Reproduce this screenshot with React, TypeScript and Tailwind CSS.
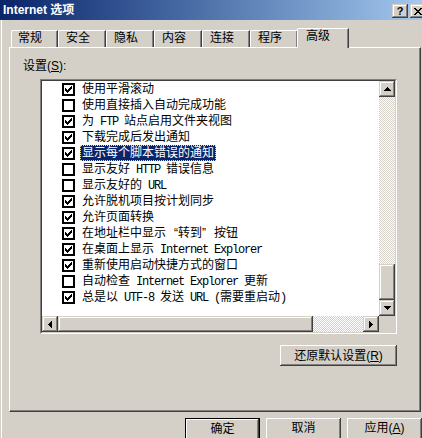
import type { ReactNode } from "react";

const RAISED =
  "bg-[#d4d0c8] shadow-[inset_-1px_-1px_#404040,inset_1px_1px_#d4d0c8,inset_-2px_-2px_#808080,inset_2px_2px_#fff]";
const BUTTON =
  "bg-[#d4d0c8] shadow-[inset_-1px_-1px_#404040,inset_1px_1px_#fff,inset_-2px_-2px_#808080]";
const TRACK =
  "bg-[image:repeating-conic-gradient(#fff_0_25%,#d4d0c8_0_50%)] bg-[length:2px_2px]";

const TABS = ["常规", "安全", "隐私", "内容", "连接", "程序"];

const ROWS: { on: boolean; text: string; selected?: boolean }[] = [
  { on: true, text: "使用平滑滚动" },
  { on: false, text: "使用直接插入自动完成功能" },
  { on: true, text: "为 FTP 站点启用文件夹视图" },
  { on: true, text: "下载完成后发出通知" },
  { on: true, text: "显示每个脚本错误的通知", selected: true },
  { on: false, text: "显示友好 HTTP 错误信息" },
  { on: false, text: "显示友好的 URL" },
  { on: true, text: "允许脱机项目按计划同步" },
  { on: true, text: "允许页面转换" },
  { on: true, text: "在地址栏中显示“转到”按钮" },
  { on: true, text: "在桌面上显示 Internet Explorer" },
  { on: true, text: "重新使用启动快捷方式的窗口" },
  { on: false, text: "自动检查 Internet Explorer 更新" },
  { on: true, text: "总是以 UTF-8 发送 URL (需要重启动)" },
];

// SimSun-style text: latin runs are half-width (6px), quotes take a full cell
function Mixed({ s }: { s: string }) {
  const parts = s.split(/([\x20-\x7e]+|[“”])/).filter(Boolean);
  return (
    <>
      {parts.map((p, i) => {
        if (p === "“" || p === "”")
          return (
            <span
              key={i}
              className={`inline-block w-[12px] ${p === "“" ? "text-right" : "text-left"}`}
            >
              {p}
            </span>
          );
        if (/^[\x20-\x7e]+$/.test(p))
          return (
            <span
              key={i}
              className="whitespace-pre font-['Liberation_Mono',monospace] tracking-[-1.2px]"
            >
              {p}
            </span>
          );
        return <span key={i}>{p}</span>;
      })}
    </>
  );
}

function Check({ on }: { on: boolean }) {
  return (
    <span className="flex h-[13px] w-[13px] shrink-0 items-center justify-center border-2 border-black bg-white">
      {on && (
        <svg width="7" height="7" viewBox="0 0 7 7" shapeRendering="crispEdges">
          <path
            d="M6 0h1v1h-1z M5 1h2v1h-2z M0 2h1v1h-1z M4 2h3v1h-3z M0 3h2v1h-2z M3 3h3v1h-3z M0 4h5v1h-5z M1 5h3v1h-3z M2 6h1v1h-1z"
            fill="#000"
          />
        </svg>
      )}
    </span>
  );
}

function Arrow({ dir }: { dir: "up" | "down" | "left" | "right" }) {
  const paths = {
    up: "M3 0h1v1h-1z M2 1h3v1h-3z M1 2h5v1h-5z M0 3h7v1h-7z",
    down: "M0 0h7v1h-7z M1 1h5v1h-5z M2 2h3v1h-3z M3 3h1v1h-1z",
    left: "M3 0h1v7h-1z M2 1h1v5h-1z M1 2h1v3h-1z M0 3h1v1h-1z",
    right: "M0 0h1v7h-1z M1 1h1v5h-1z M2 2h1v3h-1z M3 3h1v1h-1z",
  };
  const vertical = dir === "up" || dir === "down";
  return (
    <svg
      width={vertical ? 7 : 4}
      height={vertical ? 4 : 7}
      viewBox={vertical ? "0 0 7 4" : "0 0 4 7"}
      shapeRendering="crispEdges"
    >
      <path d={paths[dir]} fill="#000" />
    </svg>
  );
}

function ScrollBtn({ dir }: { dir: "up" | "down" | "left" | "right" }) {
  return (
    <div className={`flex h-[16px] w-[16px] shrink-0 items-center justify-center ${RAISED}`}>
      <Arrow dir={dir} />
    </div>
  );
}

function PushButton({
  children,
  width,
  isDefault,
}: {
  children: ReactNode;
  width: string;
  isDefault?: boolean;
}) {
  return (
    <div
      className={`${width} h-[23px] shrink-0 ${isDefault ? "border border-black" : ""}`}
    >
      <div className={`flex h-full items-start justify-center pt-[2px] leading-[16px] ${BUTTON}`}>
        {children}
      </div>
    </div>
  );
}

export default function App() {
  return (
    <div className="flex h-[438px] w-[422px] flex-col overflow-hidden bg-[#d4d0c8] font-['Liberation_Sans','Noto_Sans_CJK_SC',sans-serif] text-[12px] text-black">
      {/* title bar */}
      <div className="flex h-[20px] w-[426px] shrink-0 items-center bg-gradient-to-r from-[#0a246a] to-[#a6caf0] pl-[3px]">
        <span className="flex-1 font-bold leading-[14px] text-white">Internet 选项</span>
        <div className="flex gap-[2px] self-start pt-[4px]">
          <div className={`flex h-[14px] w-[16px] items-center justify-center ${RAISED}`}>
            <span className="text-[11px] font-bold leading-none">?</span>
          </div>
          <div className={`flex h-[14px] w-[16px] items-center justify-center ${RAISED}`}>
            <svg width="8" height="7" viewBox="0 0 8 7" shapeRendering="crispEdges">
              <path
                d="M0 0h2v1h-2z M6 0h2v1h-2z M1 1h2v1h-2z M5 1h2v1h-2z M2 2h4v1h-4z M3 3h2v1h-2z M2 4h4v1h-4z M1 5h2v1h-2z M5 5h2v1h-2z M0 6h2v1h-2z M6 6h2v1h-2z"
                fill="#000"
              />
            </svg>
          </div>
        </div>
      </div>

      <div className="ml-px flex-1 border-l border-white pl-[7px]">
        {/* tabs */}
        <div className="mt-[8px] flex h-[19px] items-end pl-[2px]">
          {TABS.map((t, i) => (
            <div
              key={t}
              className={`h-[17px] ${i === 0 ? "w-[47px] pl-[6px]" : "w-[48px] pl-[7px]"} rounded-tl-[2px] border-t border-l border-r border-t-white border-l-white border-r-[#404040] leading-[14px] shadow-[inset_-1px_0_#808080]`}
            >
              {t}
            </div>
          ))}
          <div className="relative z-10 mb-[-1px] ml-[-1px] h-[20px] w-[52px] rounded-tl-[2px] border-t border-l border-r border-t-white border-l-white border-r-[#404040] bg-[#d4d0c8] pl-[8px] leading-[14px] shadow-[inset_-1px_0_#808080]">
            高级
          </div>
        </div>

        {/* tab panel */}
        <div className="h-[365px] w-[412px] border-t border-r border-b border-l border-t-white border-l-white border-r-[#404040] border-b-[#404040] shadow-[inset_-1px_-1px_#808080]">
          <div className="pt-[11px] pl-[13px] leading-[14px]">
            设置(<u className="underline-offset-1">S</u>):
          </div>

          <div className="mt-[6px] ml-[30px] h-[255px] w-[357px] border border-t-[#808080] border-l-[#808080] border-r-white border-b-white">
            <div className="h-full w-full border border-t-[#404040] border-l-[#404040] border-r-[#d4d0c8] border-b-[#d4d0c8]">
              <div className="grid grid-cols-[337px_16px] grid-rows-[235px_16px]">
                <div className="overflow-hidden bg-white">
                  {ROWS.map((r) => (
                    <div key={r.text} className="flex h-[16px] items-center pl-[20px]">
                      <Check on={r.on} />
                      <span
                        className={`ml-[5px] h-[16px] whitespace-nowrap px-[2px] leading-[16px] ${
                          r.selected
                            ? "bg-[#0a246a] text-white outline-1 -outline-offset-1 outline-dotted outline-[#e8e0a8]"
                            : ""
                        }`}
                      >
                        <Mixed s={r.text} />
                      </span>
                    </div>
                  ))}
                </div>

                <div className="flex flex-col">
                  <ScrollBtn dir="up" />
                  <div className={`flex-1 ${TRACK}`} />
                  <div className={`h-[36px] w-[16px] ${RAISED}`} />
                  <ScrollBtn dir="down" />
                </div>

                <div className="flex">
                  <ScrollBtn dir="left" />
                  <div className={`h-[16px] w-[255px] ${RAISED}`} />
                  <div className={`flex-1 ${TRACK}`} />
                  <ScrollBtn dir="right" />
                </div>

                <div className="bg-[#d4d0c8]" />
              </div>
            </div>
          </div>

          <div className="mt-[11px] ml-[30px] flex w-[357px] justify-end">
            <div className={`flex h-[21px] w-[117px] items-center justify-center leading-[14px] ${BUTTON}`}>
              还原默认设置(<u className="underline-offset-1">R</u>)
            </div>
          </div>
        </div>

        {/* dialog buttons */}
        <div className="mt-[6px] flex justify-end gap-[6px]">
          <PushButton width="w-[75px]" isDefault>
            确定
          </PushButton>
          <PushButton width="w-[75px]">取消</PushButton>
          <PushButton width="w-[75px]">
            应用(<u className="underline-offset-1">A</u>)
          </PushButton>
        </div>
      </div>
    </div>
  );
}
